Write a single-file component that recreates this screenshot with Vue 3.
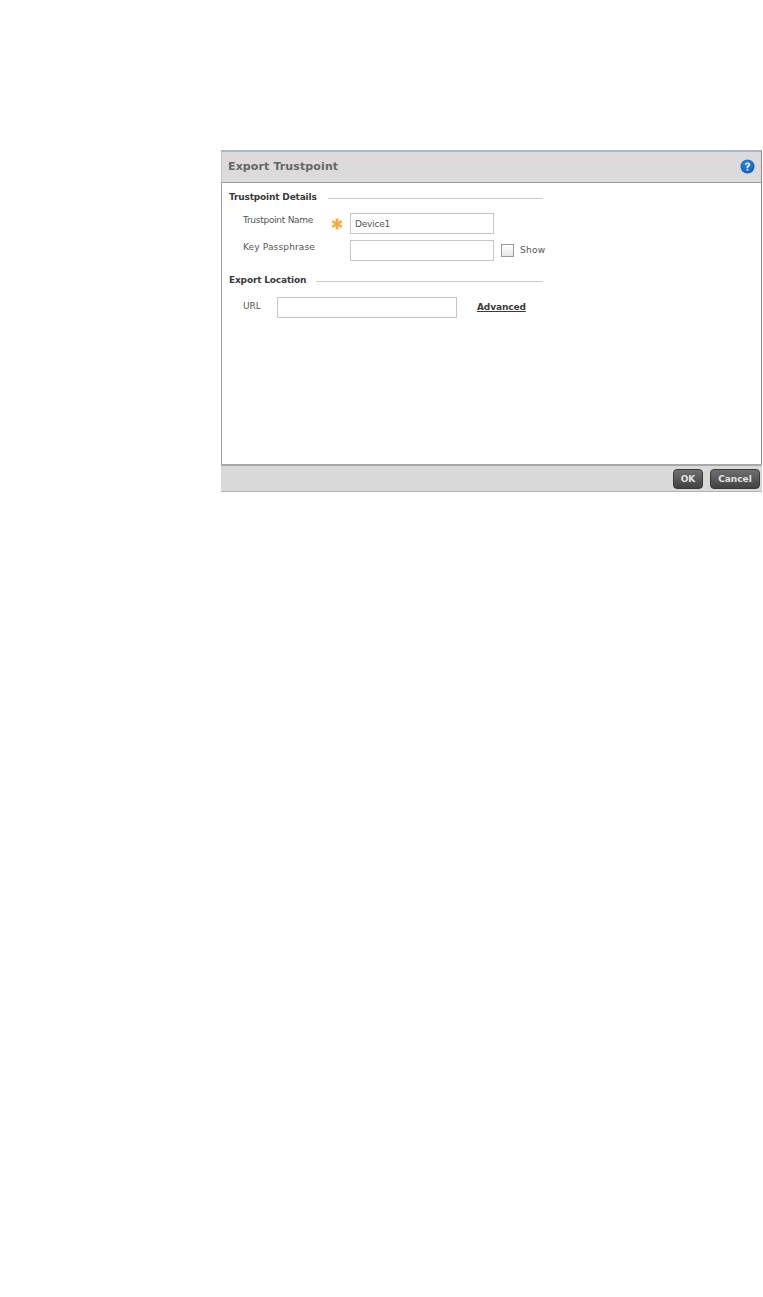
<template>
  <div class="page">
    <section class="dialog">
      <header class="dialog-head">
        <h1>Export Trustpoint</h1>
        <svg class="help" viewBox="0 0 16 16">
          <defs>
            <radialGradient id="helpFill" cx="45%" cy="35%" r="70%">
              <stop offset="0" stop-color="#2f8fe8" />
              <stop offset="1" stop-color="#0a55b5" />
            </radialGradient>
          </defs>
          <circle cx="8" cy="8" r="7.5" fill="url(#helpFill)" />
          <path d="M5.3 6.2C5.4 4.5 6.6 3.6 8.1 3.6c1.600 0 2.700 1 2.700 2.300 0 1.100-.6 1.700-1.400 2.300-.6.4-.8.7-.8 1.400H7c0-1.200.3-1.800 1.100-2.400.6-.5.9-.8.9-1.200 0-.5-.4-.9-1-.9-.6 0-1 .4-1.100 1.100z" fill="#fff" />
          <rect x="7" y="10.500" width="1.800" height="1.800" fill="#fff" />
        </svg>
      </header>

      <div class="dialog-body">
        <div class="legend"><span>Trustpoint Details</span><i></i></div>
        <div class="field-row first">
          <label class="name-label">Trustpoint Name</label>
          <span class="required">
            <svg viewBox="0 0 12 12">
              <path d="M6 .5v11M1.200 3.200l9.600 5.600M10.800 3.200l-9.600 5.600" />
            </svg>
          </span>
          <input class="text-input" value="Device1" />
        </div>
        <div class="field-row second">
          <label class="pass-label">Key Passphrase</label>
          <span class="required"></span>
          <input class="text-input" />
          <span class="check"></span>
          <span class="check-label">Show</span>
        </div>

        <div class="legend location"><span>Export Location</span><i></i></div>
        <div class="url-row">
          <label>URL</label>
          <input class="url-input" />
          <a class="advanced">Advanced</a>
        </div>
      </div>

      <footer class="dialog-foot">
        <button class="ok">OK</button>
        <button class="cancel">Cancel</button>
      </footer>
    </section>
  </div>
</template>

<script setup>
</script>

<style>
body {
  background: #fff;
}
</style>

<style scoped>
.page {
  width: 763px;
  height: 1297px;
  padding: 150px 0 0 221px;
  box-sizing: border-box;
  font-family: "DejaVu Sans", sans-serif;
  font-size: 9px;
  color: #555;
}

.dialog {
  width: 541px;
  height: 342px;
  box-sizing: border-box;
  display: flex;
  flex-direction: column;
}

.dialog-head {
  height: 33px;
  box-sizing: border-box;
  display: flex;
  align-items: center;
  justify-content: space-between;
  padding: 0 6px 0 6px;
  background: #dcdadb;
  border-top: 2px solid #aab4cc;
  border-right: 1px solid #8e8e8e;
  border-bottom: 1px solid #999;
  border-left: 1px solid #c4c4c4;
}

.dialog-head h1 {
  margin: 0 0 2px;
  font-size: 11px;
  font-weight: 700;
  letter-spacing: 0.12px;
  color: #666;
}

.help {
  width: 15px;
  height: 15px;
  margin-bottom: 1px;
}

.dialog-body {
  flex: 1;
  box-sizing: border-box;
  padding: 8px 0 0 7px;
  background: #fff;
  border-left: 1px solid #9a9a9a;
  border-right: 1px solid #8e8e8e;
}

.legend {
  width: 314px;
  height: 14px;
  display: flex;
  align-items: center;
  gap: 11px;
  font-weight: 700;
  letter-spacing: -0.17px;
  color: #3a3a3a;
}

.legend span {
  margin-bottom: 2px;
}

.legend i {
  flex: 1;
  height: 1px;
  background: #c6ccc8;
}

.field-row {
  display: flex;
  align-items: center;
  height: 21px;
  margin-left: 14px;
}

.field-row.first {
  margin-top: 8px;
}

.field-row.second {
  margin-top: 6px;
}

.field-row label {
  width: 88px;
  margin-bottom: 8px;
}

.name-label {
  letter-spacing: -0.27px;
}

.pass-label {
  letter-spacing: 0.15px;
}

.required {
  width: 19px;
  height: 21px;
  display: flex;
  align-items: center;
}

.required svg {
  width: 12px;
  height: 12px;
  margin: 1px 0 0 -0.5px;
  fill: none;
  stroke: #fbab45;
  stroke-width: 2.6;
}

.text-input,
.url-input {
  box-sizing: border-box;
  height: 21px;
  padding: 0 4px;
  border: 1px solid #c6c6c6;
  background: #fff;
  font: inherit;
  color: #555;
  outline: none;
}

.text-input {
  width: 144px;
  letter-spacing: -0.2px;
}

.check {
  width: 13px;
  height: 13px;
  box-sizing: border-box;
  margin: 0 0 1px 7px;
  border: 1px solid #999;
  background: linear-gradient(#fff, #e6e6e6);
}

.check-label {
  margin: 0 0 2px 6px;
  letter-spacing: 0.3px;
}

.legend.location {
  margin-top: 13px;
  gap: 10px;
}

.url-row {
  display: flex;
  align-items: center;
  height: 21px;
  margin-top: 9px;
  margin-left: 14px;
}

.url-row label {
  width: 34px;
  margin-bottom: 4px;
}

.url-input {
  width: 180px;
}

.advanced {
  margin: 0 0 2px 20px;
  font-weight: 700;
  letter-spacing: -0.1px;
  color: #3a3a3a;
  text-decoration: underline;
}

.dialog-foot {
  height: 28px;
  box-sizing: border-box;
  display: flex;
  align-items: center;
  justify-content: flex-end;
  gap: 7px;
  padding: 1px 2px 0 0;
  background: #d9d9d9;
  border-top: 2px solid #a8a8a8;
  border-bottom: 1px solid #b4b4b4;
}

.dialog-foot button {
  height: 20px;
  padding: 0;
  border: 1px solid #3a3a3a;
  border-radius: 4px;
  background: linear-gradient(#6e6e6e, #424242);
  color: #e4e4e4;
  font: 700 9px "DejaVu Sans", sans-serif;
}

.ok {
  width: 30px;
}

.cancel {
  width: 50px;
}
</style>
